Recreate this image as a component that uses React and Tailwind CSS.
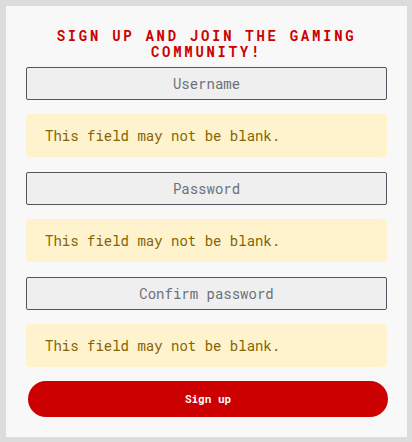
function Field({ ph, first }) {
  return (
    <>
      <input
        placeholder={ph}
        className={`${first ? "mt-[7px]" : "mt-[15px]"} block h-[33px] w-[361px] rounded-[2px] border border-[#55555f] bg-[#efefef] text-center font-['Roboto_Mono','DejaVu_Sans_Mono',monospace] text-[14px] text-[#333] outline-none placeholder:text-[#6b7078]`}
      />
      <div className="mt-[14px] flex h-[43px] w-[361px] items-center rounded-[4px] bg-[#fff3cd] pl-[19px] font-['Roboto_Mono','DejaVu_Sans_Mono',monospace] text-[14px] text-[#856404]">
        This field may not be blank.
      </div>
    </>
  );
}

export default function App() {
  return (
    <div className="h-[442px] w-[412px] bg-[#dcdcdc] p-[6px]">
      <div className="flex h-[431px] w-[401px] flex-col bg-[#f8f8f8] px-[20px] pt-[22px]">
        <h1 className="w-[361px] text-center font-['Roboto_Mono','DejaVu_Sans_Mono',monospace] text-[14px] font-bold uppercase leading-[16px] tracking-[2.7px] text-[#cc0000]">
          Sign up and join the gaming community!
        </h1>
        <Field ph="Username" first />
        <Field ph="Password" />
        <Field ph="Confirm password" />
        <button className="ml-[2px] mt-[14px] flex h-[36px] w-[360px] items-center justify-center rounded-full bg-[#cc0000] font-['Roboto_Mono','DejaVu_Sans_Mono',monospace] text-[11px] font-bold text-white">
          Sign up
        </button>
      </div>
    </div>
  );
}
